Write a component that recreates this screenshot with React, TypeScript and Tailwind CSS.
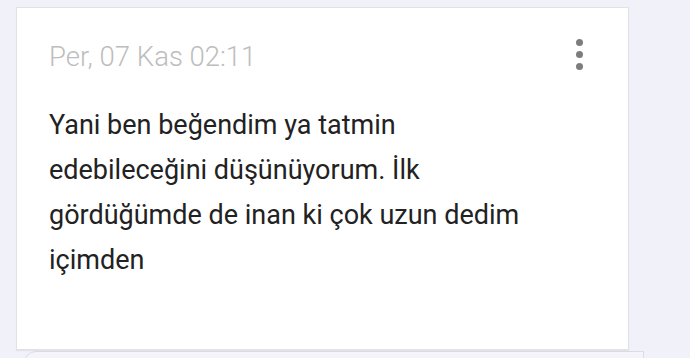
export default function App() {
  return (
    <div className="w-[690px] h-[358px] overflow-hidden bg-[#f1f1f9] pt-[7px] pl-[16px]" style={{ fontFamily: 'Roboto, "Noto Sans", sans-serif' }}>
      <div className="relative w-[613px] h-[343px] bg-white border border-[#e2e2e6] shadow-[0_1px_1px_rgba(0,0,0,0.06)] pl-[32px] pt-[33px]">
        <div className="text-[27.5px] leading-[32px] font-light text-[#bdbdbd]">Per, 07 Kas 02:11</div>
        <div className="absolute right-[45px] top-[31px] flex flex-col gap-[5px]">
          <span className="block w-[7px] h-[7px] rounded-full bg-[#7d7d7d]" />
          <span className="block w-[7px] h-[7px] rounded-full bg-[#7d7d7d]" />
          <span className="block w-[7px] h-[7px] rounded-full bg-[#7d7d7d]" />
        </div>
        <p className="mt-[30px] w-[495px] text-[27px] leading-[45px] text-[#222222]">
          Yani ben beğendim ya tatmin edebileceğini düşünüyorum. İlk gördüğümde de inan ki çok uzun dedim içimden
        </p>
      </div>
      <div className="ml-[8px] mt-[1px] w-[620px] h-[20px] rounded-tl-[12px] border border-[#dcdce4] bg-[#f4f4fa]" />
    </div>
  );
}
